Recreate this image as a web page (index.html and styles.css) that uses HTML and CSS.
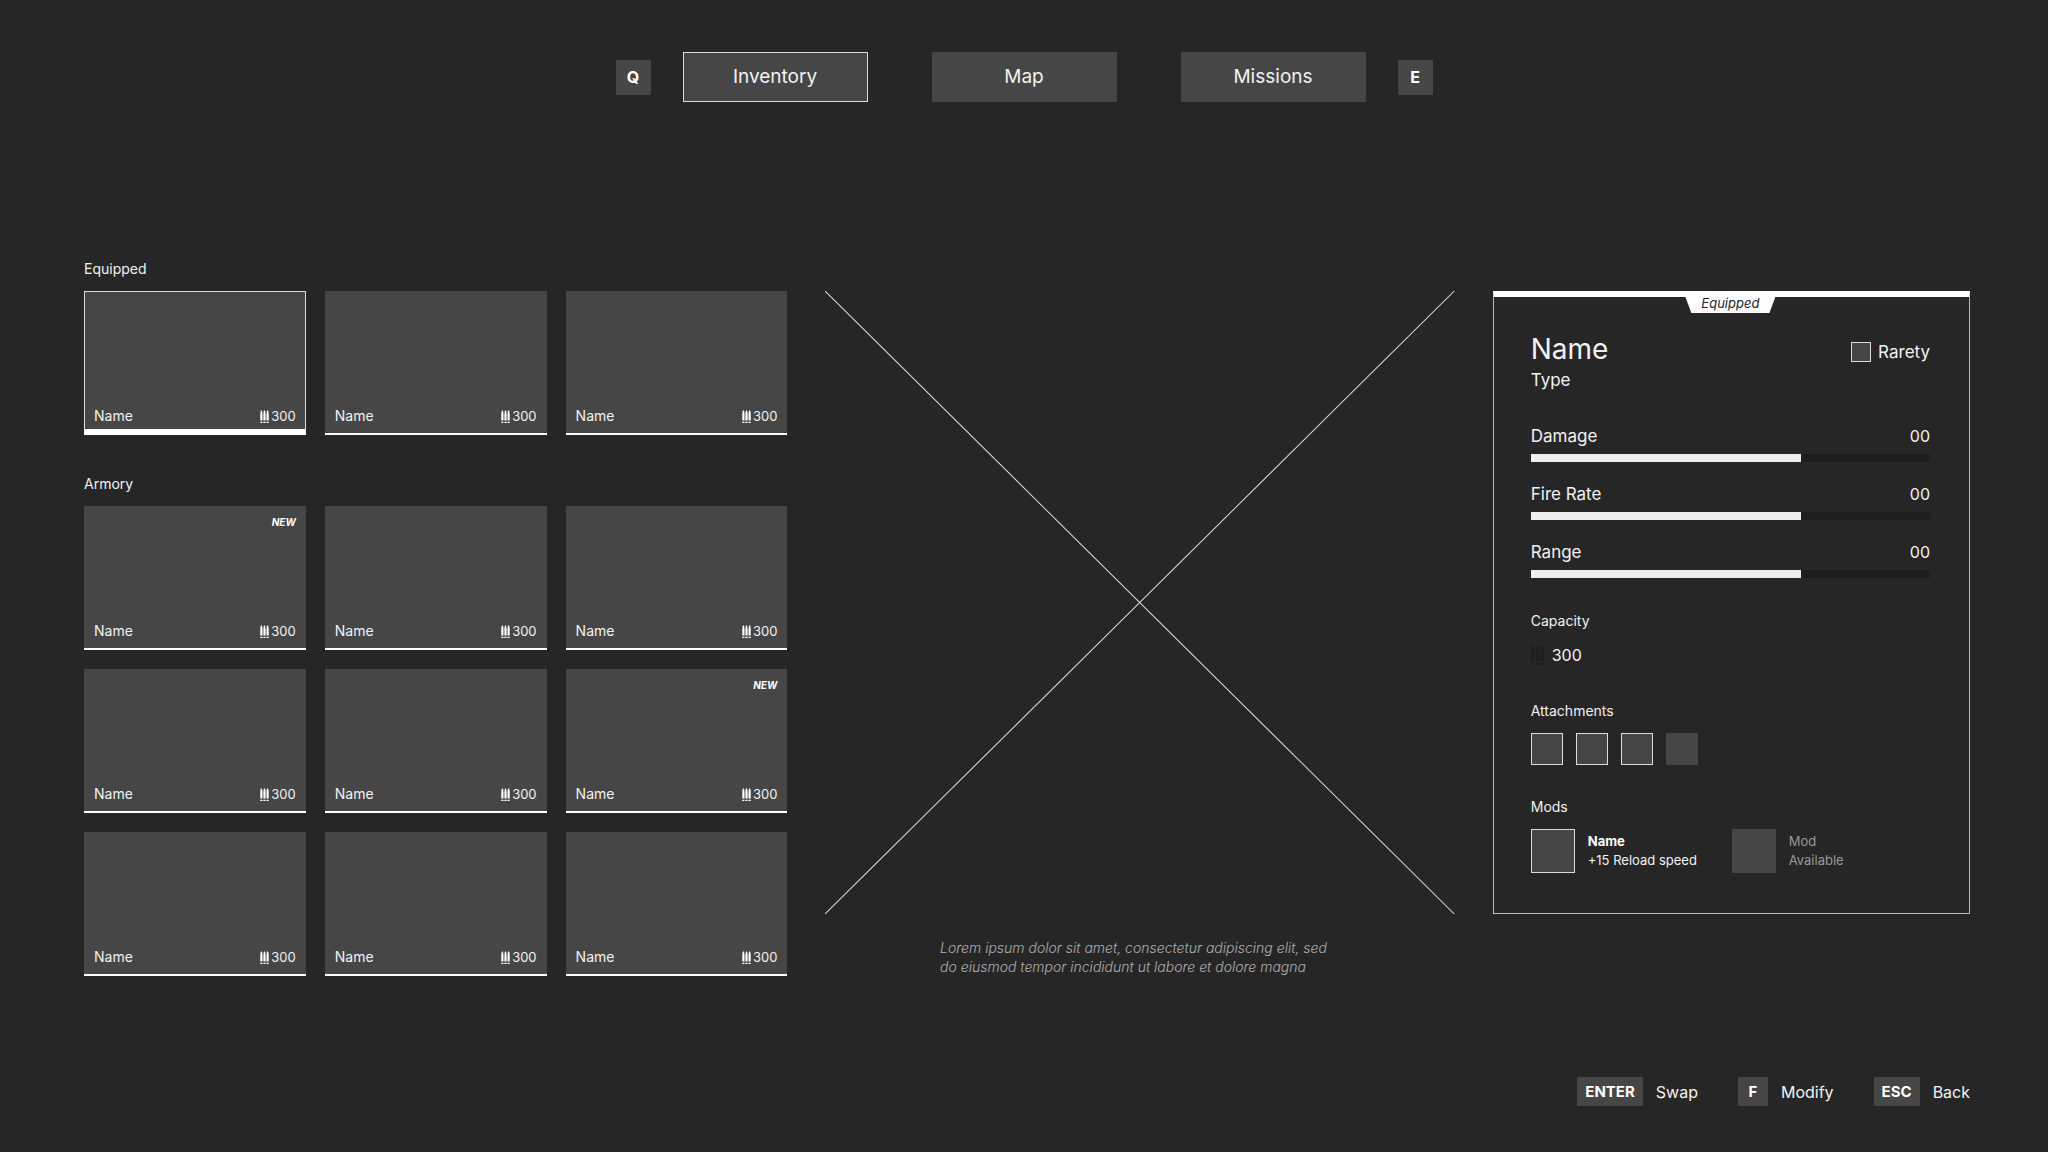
FILE: index.html
```html
<!DOCTYPE html>
<html lang="en">

<head>
  <meta charset="UTF-8">
  <meta name="viewport" content="width=device-width, initial-scale=1.0">
  <title>Inventory</title>
  <link rel="stylesheet" href="styles.css">
</head>

<body>
  <!-- ammo icon, shared by the cards and the details panel -->
  <svg class="sprite" aria-hidden="true">
    <symbol id="ammo" viewBox="0 0 13 20">
      <path d="M0 16V6Q0 2 1.7 0Q3.4 2 3.4 6V16ZM4.8 16V6Q4.8 2 6.5 0Q8.2 2 8.2 6V16ZM9.6 16V6Q9.6 2 11.3 0Q13 2 13 6V16ZM0 18H3.4V20H0ZM4.8 18H8.2V20H4.8ZM9.6 18H13V20H9.6Z"/>
    </symbol>
  </svg>

  <nav class="tabs">
    <kbd class="key">Q</kbd>
    <div class="tab-list">
      <button class="tab active" type="button">Inventory</button>
      <button class="tab" type="button">Map</button>
      <button class="tab" type="button">Missions</button>
    </div>
    <kbd class="key">E</kbd>
  </nav>

  <main>
    <div class="items">
      <section>
        <h2>Equipped</h2>
        <div class="cards">
          <button class="card selected" type="button"><span>Name</span><span class="ammo"><svg><use href="#ammo"/></svg>300</span></button>
          <button class="card" type="button"><span>Name</span><span class="ammo"><svg><use href="#ammo"/></svg>300</span></button>
          <button class="card" type="button"><span>Name</span><span class="ammo"><svg><use href="#ammo"/></svg>300</span></button>
        </div>
      </section>

      <section>
        <h2>Armory</h2>
        <div class="cards">
          <button class="card" type="button"><em class="new">NEW</em><span>Name</span><span class="ammo"><svg><use href="#ammo"/></svg>300</span></button>
          <button class="card" type="button"><span>Name</span><span class="ammo"><svg><use href="#ammo"/></svg>300</span></button>
          <button class="card" type="button"><span>Name</span><span class="ammo"><svg><use href="#ammo"/></svg>300</span></button>
          <button class="card" type="button"><span>Name</span><span class="ammo"><svg><use href="#ammo"/></svg>300</span></button>
          <button class="card" type="button"><span>Name</span><span class="ammo"><svg><use href="#ammo"/></svg>300</span></button>
          <button class="card" type="button"><em class="new">NEW</em><span>Name</span><span class="ammo"><svg><use href="#ammo"/></svg>300</span></button>
          <button class="card" type="button"><span>Name</span><span class="ammo"><svg><use href="#ammo"/></svg>300</span></button>
          <button class="card" type="button"><span>Name</span><span class="ammo"><svg><use href="#ammo"/></svg>300</span></button>
          <button class="card" type="button"><span>Name</span><span class="ammo"><svg><use href="#ammo"/></svg>300</span></button>
        </div>
      </section>
    </div>

    <figure class="preview">
      <svg viewBox="0 0 100 100" preserveAspectRatio="none">
        <path d="M0 0L100 100M100 0L0 100"/>
      </svg>
      <figcaption>Lorem ipsum dolor sit amet, consectetur adipiscing elit, sed<br>do eiusmod tempor incididunt ut labore et dolore magna</figcaption>
    </figure>

    <aside class="details">
      <div class="tag">Equipped</div>

      <div class="title">
        <h1>Name</h1>
        <div class="rarity"><span class="box"></span>Rarety</div>
      </div>
      <p class="type">Type</p>

      <div class="stats">
        <div class="stat">
          <label for="damage">Damage</label><span>00</span>
          <progress id="damage" value="270" max="399"></progress>
        </div>
        <div class="stat">
          <label for="firerate">Fire Rate</label><span>00</span>
          <progress id="firerate" value="270" max="399"></progress>
        </div>
        <div class="stat">
          <label for="range">Range</label><span>00</span>
          <progress id="range" value="270" max="399"></progress>
        </div>
      </div>

      <h2>Capacity</h2>
      <div class="capacity"><svg><use href="#ammo"/></svg>300</div>

      <h2>Attachments</h2>
      <div class="attachments">
        <span class="box"></span>
        <span class="box"></span>
        <span class="box"></span>
        <span class="box empty"></span>
      </div>

      <h2>Mods</h2>
      <div class="mods">
        <div class="mod">
          <span class="box"></span>
          <p><strong>Name</strong><br>+15 Reload speed</p>
        </div>
        <div class="mod locked">
          <span class="box empty"></span>
          <p>Mod<br>Available</p>
        </div>
      </div>
    </aside>
  </main>

  <footer>
    <button class="action" type="button"><kbd class="key">ENTER</kbd>Swap</button>
    <button class="action" type="button"><kbd class="key">F</kbd>Modify</button>
    <button class="action" type="button"><kbd class="key">ESC</kbd>Back</button>
  </footer>
</body>

</html>
```
FILE: styles.css
```css
* {
  box-sizing: border-box;
}

body {
  display: flex;
  flex-direction: column;
  min-height: 100vh;
  margin: 0;
  padding: 52px 78px 46px 84px;
  background-color: #262626;
  color: #f2f2f2;
  font-family: Inter, "Liberation Sans", sans-serif;
  font-size: 14px;
  line-height: 20px;
}

h1, h2, p, figure {
  margin: 0;
  font-weight: 400;
}

h2 {
  font-size: 14px;
  line-height: 20px;
}

button {
  padding: 0;
  border: 0;
  background: none;
  color: inherit;
  font: inherit;
}

.sprite {
  position: absolute;
  width: 0;
  height: 0;
}

.key {
  display: flex;
  align-items: center;
  justify-content: center;
  border-radius: 1px;
  background-color: #464646;
  color: #fff;
  font-family: inherit;
  font-size: 15px;
  font-weight: 700;
}

/* top navigation */
.tabs {
  display: flex;
  align-items: center;
  justify-content: center;
  gap: 32px;
  margin: 0 -78px 0 -84px;
}

.tabs .key {
  width: 35px;
  height: 35px;
  font-size: 16px;
}

.tab-list {
  display: flex;
  gap: 64px;
}

.tab {
  width: 185px;
  height: 50px;
  border: 1px solid #464646;
  background-color: #464646;
  font-size: 19px;
}

.tab.active {
  border-color: #ddd;
}

/* three columns */
main {
  display: grid;
  grid-template-columns: 703fr 629fr 477fr;
  gap: 38px;
  align-items: start;
  margin-top: 157px;
}

.items {
  display: grid;
  gap: 39px;
}

.cards {
  display: grid;
  grid-template-columns: repeat(3, 1fr);
  gap: 19px;
  margin-top: 12px;
}

.card {
  position: relative;
  display: flex;
  align-items: flex-end;
  justify-content: space-between;
  height: 144px;
  padding: 0 10px 7px;
  border-bottom: 2px solid #fff;
  background-color: #464646;
}

.card.selected {
  padding: 0 9px 3px;
  border: 1px solid #ddd;
  border-bottom: 6px solid #fff;
}

.ammo {
  display: flex;
  align-items: center;
  gap: 2px;
  font-size: 13px;
}

.ammo svg {
  width: 9px;
  height: 13px;
  fill: #fff;
}

.new {
  position: absolute;
  top: 6px;
  right: 10px;
  color: #fff;
  font-size: 10px;
  font-weight: 700;
}

/* preview */
.preview {
  margin-top: 32px;
}

.preview svg {
  display: block;
  width: 100%;
  height: 623px;
}

.preview path {
  fill: none;
  stroke: #ddd;
  stroke-width: 1px;
  vector-effect: non-scaling-stroke;
}

figcaption {
  width: 400px;
  margin: 24px auto 0;
  color: #b0b0b0;
  font-style: italic;
  font-weight: 300;
  line-height: 19px;
  white-space: nowrap;
}

/* details panel */
.details {
  margin-top: 32px;
  padding: 0 39px 40px 37px;
  border: 1px solid #bbb;
  border-top: 6px solid #fff;
}

.tag {
  width: 90px;
  margin: 0 auto;
  padding-bottom: 4px;
  background-color: #fff;
  clip-path: polygon(0 0, 100% 0, 84px 100%, 6px 100%);
  color: #262626;
  font-size: 13px;
  font-style: italic;
  line-height: 12px;
  text-align: center;
}

.title {
  display: flex;
  justify-content: space-between;
  margin-top: 20px;
}

h1 {
  font-size: 28px;
  line-height: 32px;
}

.box {
  display: block;
  border: 1px solid #ddd;
  background-color: #464646;
}

.box.empty {
  border-color: #464646;
}

.rarity {
  display: flex;
  align-items: center;
  gap: 7px;
  margin-top: 6px;
  font-size: 17px;
}

.rarity .box {
  width: 20px;
  height: 20px;
}

.type {
  font-size: 17px;
  line-height: 30px;
}

.stats {
  display: grid;
  gap: 21px;
  margin: 30px 0 33px;
}

.stat {
  display: flex;
  flex-wrap: wrap;
  justify-content: space-between;
  row-gap: 7px;
  font-size: 16px;
  line-height: 22px;
}

.stat label {
  font-size: 17px;
}

progress {
  display: block;
  width: 100%;
  height: 8px;
  border: 0;
  background-color: #1e1e1e;
  -webkit-appearance: none;
  appearance: none;
}

progress::-webkit-progress-bar {
  background-color: #1e1e1e;
}

progress::-webkit-progress-value {
  background-color: #eee;
}

.capacity {
  display: flex;
  align-items: center;
  gap: 8px;
  margin: 14px 0 36px;
  font-size: 16px;
}

.capacity svg {
  width: 13px;
  height: 20px;
  fill: #1e1e1e;
}

.attachments {
  display: flex;
  gap: 13px;
  margin: 12px 0 32px;
}

.attachments .box {
  width: 32px;
  height: 32px;
}

.mods {
  display: flex;
  gap: 32px;
  margin-top: 12px;
}

.mod {
  display: flex;
  align-items: center;
  gap: 13px;
  min-width: 169px;
  font-size: 13px;
  line-height: 19px;
  white-space: nowrap;
}

.mod .box {
  width: 44px;
  height: 44px;
}

.mod strong {
  color: #fff;
}

.mod.locked {
  color: #999;
}

/* key hints */
footer {
  display: flex;
  justify-content: flex-end;
  gap: 40px;
  margin-top: auto;
}

.action {
  display: flex;
  align-items: center;
  gap: 13px;
  font-size: 16px;
}

.action .key {
  min-width: 30px;
  height: 29px;
  padding: 0 8px;
}
```
